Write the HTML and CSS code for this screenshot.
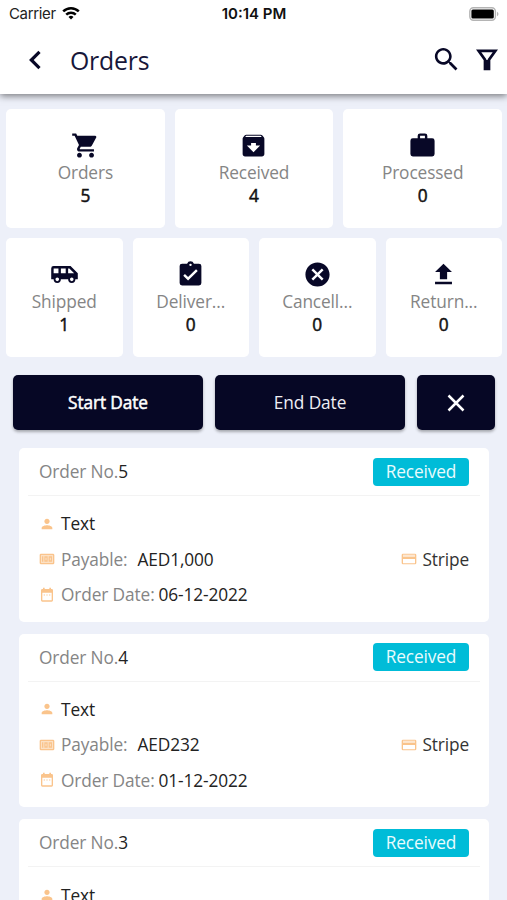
FILE: index.html
```html
<!DOCTYPE html>
<html lang="en">
<head>
<meta charset="utf-8">
<title>Orders</title>
<link rel="stylesheet" href="styles.css">
</head>
<body>
<svg class="defs" width="0" height="0">
  <symbol id="person" viewBox="0 0 24 24"><path d="M12 12c2.2 0 4-1.8 4-4s-1.800-4-4-4-4 1.800-4 4 1.800 4 4 4zm0 2c-2.700 0-8 1.300-8 4v2h16v-2c0-2.700-5.300-4-8-4z"/></symbol>
  <symbol id="money" viewBox="0 0 24 24"><path fill-rule="evenodd" d="M3 4h18a2 2 0 0 1 2 2v12a2 2 0 0 1-2 2H3a2 2 0 0 1-2-2V6a2 2 0 0 1 2-2zm0 2v12h18V6z"/><path fill-rule="evenodd" d="M4.500 8h2v8h-2zM8 8h5v8H8zm1.700 2v4h1.600v-4zM14.500 8h5v8h-5zm1.700 2v4h1.600v-4z"/><path opacity=".5" d="M3 6h18v12H3z"/></symbol>
  <symbol id="calendar" viewBox="0 0 24 24"><path fill-rule="evenodd" d="M6 1h2.500v2h7V1H18v2h1a2 2 0 0 1 2 2v15a2 2 0 0 1-2 2H5a2 2 0 0 1-2-2V5a2 2 0 0 1 2-2h1zM5 8.500V20h14V8.500z"/><path opacity=".6" d="M7 11h2v2H7zm4 0h2v2h-2zm4 0h2v2h-2z"/></symbol>
  <symbol id="card" viewBox="0 0 24 24"><path fill-rule="evenodd" d="M3 4h18a2 2 0 0 1 2 2v12a2 2 0 0 1-2 2H3a2 2 0 0 1-2-2V6a2 2 0 0 1 2-2zm0 1.800v2.700h18V5.800zM3 12v6.300h18V12z"/><path opacity=".4" d="M3 5.800h18v2.700H3z"/></symbol>
</svg>
<header class="topbar">
  <div class="status">
    <div class="carrier">Carrier
      <svg class="wifi" viewBox="0 0 18 14"><path d="M9 13.600 6.500 11a3.600 3.600 0 0 1 5 0z"/><path class="arc" d="M4.200 8.600a6.900 6.900 0 0 1 9.600 0M1.200 5.300a11.200 11.200 0 0 1 15.600 0"/></svg>
    </div>
    <div class="time">10:14 PM</div>
    <div class="power"><svg class="battery" viewBox="0 0 30 14"><rect class="shell" x=".8" y=".8" width="25.600" height="12.400" rx="3.600"/><rect x="2.400" y="2.400" width="22.400" height="9.200" rx="1.500"/><path class="tip" d="M28 4.800c2 .8 2 3.600 0 4.400z"/></svg></div>
  </div>
  <div class="nav">
    <svg class="back" viewBox="0 0 14 20"><path d="M11.500 1.800 3.300 10l8.200 8.200"/></svg>
    <h1>Orders</h1>
    <svg class="tool" viewBox="0 0 24 24"><path d="M15.500 14h-.79l-.28-.27C15.410 12.590 16 11.110 16 9.500 16 5.910 13.090 3 9.500 3S3 5.910 3 9.500 5.910 16 9.500 16c1.610 0 3.090-.59 4.230-1.570l.27.28v.79l5 4.990L20.490 19l-4.990-5zm-6 0C7.010 14 5 11.990 5 9.500S7.010 5 9.500 5 14 7.010 14 9.500 11.990 14 9.500 14z"/></svg>
    <svg class="filter" viewBox="0 0 22 22"><path d="M2.600 1.900h16.800L13 10.800v9H9v-9z"/><path class="solid" d="M8.300 11h5.400v9.600H8.300z"/></svg>
  </div>
</header>
<main>
  <section class="stats three">
    <div class="stat"><svg viewBox="0 0 24 24"><path d="M7 18c-1.100 0-1.990.9-1.990 2S5.900 22 7 22s2-.9 2-2-.9-2-2-2zM1 2v2h2l3.600 7.590-1.350 2.450c-.16.28-.25.61-.25.960 0 1.100.9 2 2 2h12v-2H7.420c-.14 0-.25-.11-.25-.25l.03-.12.900-1.630h7.450c.75 0 1.410-.41 1.750-1.030l3.580-6.490A1 1 0 0 0 20 4H5.210l-.94-2H1zm16 16c-1.100 0-1.990.9-1.990 2s.89 2 1.990 2 2-.9 2-2-.9-2-2-2z"/></svg><span>Orders</span><b>5</b></div>
    <div class="stat"><svg viewBox="0 0 24 24"><path fill-rule="evenodd" d="M20.540 5.230l-1.390-1.680C18.880 3.210 18.470 3 18 3H6c-.47 0-.88.21-1.160.55L3.460 5.230C3.170 5.570 3 6.020 3 6.500V19c0 1.100.9 2 2 2h14c1.100 0 2-.9 2-2V6.500c0-.48-.17-.93-.46-1.270zM12 17.500L6.500 12H10v-2h4v2h3.500L12 17.500zM5.120 5l.81-1h12l.94 1H5.120z"/></svg><span>Received</span><b>4</b></div>
    <div class="stat"><svg viewBox="0 0 24 24"><path fill-rule="evenodd" d="M20 6h-4V4a2 2 0 0 0-2-2h-4a2 2 0 0 0-2 2v2H4a2 2 0 0 0-2 2v11a2 2 0 0 0 2 2h16a2 2 0 0 0 2-2V8a2 2 0 0 0-2-2zm-6 0h-4V4h4z"/></svg><span>Processed</span><b>0</b></div>
  </section>
  <section class="stats four">
    <div class="stat"><svg viewBox="0 0 24 24"><path fill-rule="evenodd" d="M17 5H3a2 2 0 0 0-2 2v9h2a3 3 0 0 0 6 0h6a3 3 0 0 0 6 0h2v-5zM3 11V7h4v4zm3 6.500a1.500 1.500 0 1 1 0-3 1.500 1.500 0 0 1 0 3zM13 11H9V7h4zm5 6.500a1.500 1.500 0 1 1 0-3 1.500 1.500 0 0 1 0 3zM15 11V7h1l4 4z"/></svg><span>Shipped</span><b>1</b></div>
    <div class="stat"><svg viewBox="0 0 24 24"><path fill-rule="evenodd" d="M19 3h-4.180a3 3 0 0 0-5.640 0H5a2 2 0 0 0-2 2v14a2 2 0 0 0 2 2h14a2 2 0 0 0 2-2V5a2 2 0 0 0-2-2zm-7 0a1 1 0 1 1 0 2 1 1 0 0 1 0-2zm-2 14-4-4 1.410-1.410L10 14.170l6.590-6.590L18 9z"/></svg><span>Deliver...</span><b>0</b></div>
    <div class="stat"><svg viewBox="0 0 24 24"><path fill-rule="evenodd" d="M12 2C6.470 2 2 6.470 2 12s4.470 10 10 10 10-4.470 10-10S17.530 2 12 2zm5 13.590L15.590 17 12 13.410 8.410 17 7 15.590 10.590 12 7 8.410 8.410 7 12 10.590 15.590 7 17 8.410 13.410 12z"/></svg><span>Cancell...</span><b>0</b></div>
    <div class="stat"><svg viewBox="0 0 24 24"><path d="M9 16h6v-6h4l-7-7-7 7h4zm-4 2h14v2H5z"/></svg><span>Return...</span><b>0</b></div>
  </section>
  <section class="dates">
    <button class="start">Start Date</button>
    <button>End Date</button>
    <button aria-label="Clear"><svg viewBox="0 0 18 18"><path d="m1.500 1.500 15 15m0-15-15 15"/></svg></button>
  </section>
  <section class="orders">
    <article class="order">
      <div class="head"><div class="no">Order No.<em>5</em></div><div class="badge">Received</div></div>
      <div class="row"><svg><use href="#person"/></svg><em>Text</em></div>
      <div class="row"><svg><use href="#money"/></svg><span>Payable:</span><em class="amount">AED1,000</em><div class="method"><svg><use href="#card"/></svg>Stripe</div></div>
      <div class="row"><svg><use href="#calendar"/></svg><span>Order Date:</span><em class="date">06-12-2022</em></div>
    </article>
    <article class="order">
      <div class="head"><div class="no">Order No.<em>4</em></div><div class="badge">Received</div></div>
      <div class="row"><svg><use href="#person"/></svg><em>Text</em></div>
      <div class="row"><svg><use href="#money"/></svg><span>Payable:</span><em class="amount">AED232</em><div class="method"><svg><use href="#card"/></svg>Stripe</div></div>
      <div class="row"><svg><use href="#calendar"/></svg><span>Order Date:</span><em class="date">01-12-2022</em></div>
    </article>
    <article class="order">
      <div class="head"><div class="no">Order No.<em>3</em></div><div class="badge">Received</div></div>
      <div class="row"><svg><use href="#person"/></svg><em>Text</em></div>
    </article>
  </section>
</main>
</body>
</html>
```
FILE: styles.css
```css
* { box-sizing: border-box; }
html, body { height: 900px; overflow: hidden; }
body {
  margin: 0;
  display: flex;
  flex-direction: column;
  background: #edf0f9;
  font-family: "Open Sans", "Noto Sans", sans-serif;
  font-size: 17.300px;
  letter-spacing: -.12px;
  color: #222;
}
svg { display: block; flex: none; }
.defs { position: absolute; }
em { font-style: normal; color: #222; }

.topbar {
  position: relative;
  flex: none;
  height: 94px;
  background: #fff;
  box-shadow: 0 2px 7px rgba(0, 0, 0, .5);
}
.status {
  display: grid;
  grid-template-columns: 1fr auto 1fr;
  align-items: center;
  height: 27px;
  padding: 0 8px 0 9px;
  font: 15px/27px Inter, sans-serif;
  letter-spacing: -.35px;
  color: #222;
}
.carrier { display: flex; align-items: center; gap: 6px; }
.wifi { width: 18px; height: 14px; margin-top: -2px; fill: #000; }
.arc { fill: none; stroke: #000; stroke-width: 2.500; }
.time { font-weight: 600; color: #111; letter-spacing: 0; }
.power { display: flex; justify-content: flex-end; }
.battery { width: 30px; height: 14px; }
.shell { fill: #fff; stroke: #b4b4b4; stroke-width: 1.400; }
.tip { fill: #b4b4b4; }

.nav { display: flex; align-items: center; height: 66px; padding: 0 9px 0 28px; }
.back { width: 14px; height: 20px; fill: none; stroke: #080827; stroke-width: 3.200; }
h1 { flex: 1; margin: -1px 0 0 28px; font-size: 24.800px; font-weight: 400; line-height: 34px; letter-spacing: -.2px; color: #17173a; }
.tool { width: 31px; height: 31px; fill: #080827; margin: -1px 14px 0 0; }
.filter { width: 22px; height: 22px; fill: none; stroke: #080827; stroke-width: 2.700; }
.filter .solid { fill: #080827; stroke: none; }

.stats { display: grid; gap: 10px; padding: 0 5px 0 6px; }
.three { grid-template-columns: repeat(3, 1fr); margin-top: 15px; }
.four { grid-template-columns: repeat(4, 1fr); margin-top: 10px; }
.stat {
  display: flex;
  flex-direction: column;
  align-items: center;
  height: 119px;
  padding-top: 22px;
  border-radius: 5px;
  background: #fff;
  line-height: 23px;
}
.stat svg { width: 29px; height: 29px; margin-bottom: 1px; fill: #080827; }
.stat span { color: #858585; }
.stat b { font-weight: 400; color: #111; -webkit-text-stroke: .5px #111; }

.dates { display: grid; grid-template-columns: 190px 190px 78px; gap: 12px; margin: 18px 12px 0 13px; }
.dates button {
  display: flex;
  align-items: center;
  justify-content: center;
  height: 55px;
  padding: 0;
  border: 0;
  border-radius: 5px;
  background: #060725;
  box-shadow: 0 2px 3px rgba(0, 0, 0, .3);
  color: #eeeef4;
  font: 17.300px "Open Sans", "Noto Sans", sans-serif;
  letter-spacing: -.1px;
}
.dates .start { color: #fff; -webkit-text-stroke: .5px #fff; }
.dates svg { width: 18px; height: 18px; fill: none; stroke: #fff; stroke-width: 2.500; }

.orders { display: flex; flex-direction: column; gap: 12px; margin: 18px 18px 0 19px; }
.order { height: 173.700px; flex: none; padding: 0 9px; border-radius: 5px; background: #fff; }
.head {
  display: flex;
  align-items: center;
  justify-content: space-between;
  height: 48px;
  margin-bottom: 10px;
  padding: 0 11px;
  border-bottom: 1px solid #f3f3f3;
}
.no { color: #858585; }
.badge {
  width: 96px;
  height: 28px;
  border-radius: 4px;
  background: #00bcd8;
  color: #e9fbfd;
  line-height: 28px;
  text-align: center;
}
.row { display: flex; align-items: center; height: 35.500px; padding: 0 11px; }
.row svg { width: 16px; height: 16px; margin-right: 6px; fill: #fac48c; }
.row span { color: #858585; }
.amount { margin-left: 10px; }
.date { margin-left: 4px; }
.method { display: flex; align-items: center; margin-left: auto; color: #333; }
.method svg { margin-right: 5px; }
```
